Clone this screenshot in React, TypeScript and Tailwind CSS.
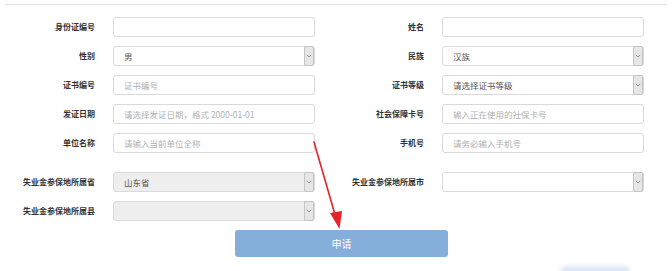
const font = { fontFamily: '"Noto Sans CJK SC", "Noto Sans", sans-serif' }

function Chevron() {
  return (
    <span className="absolute right-0 top-[-1px] bottom-[-1px] w-[10px] flex items-center justify-center bg-[#e6e6e6] border border-[#c4c4c4] rounded-[2px]">
      <svg width="6" height="4" viewBox="0 0 6 4" fill="none">
        <path d="M0.8 0.8L3 3L5.2 0.8" stroke="#8a8a8a" strokeWidth="0.9" />
      </svg>
    </span>
  )
}

function Field({
  value,
  placeholder,
  select,
  disabled,
}: {
  value?: string
  placeholder?: string
  select?: boolean
  disabled?: boolean
}) {
  return (
    <div
      className={`relative h-[20px] w-[202px] rounded-[3px] border border-[#d9d9d9] flex items-center pl-[10px] text-[8.5px] ${
        disabled ? 'bg-[#eeeeee]' : 'bg-white'
      }`}
    >
      {value ? (
        <span className="text-[#555]">{value}</span>
      ) : (
        <span className="text-[#b0b0b0]">{placeholder}</span>
      )}
      {select && <Chevron />}
    </div>
  )
}

function Row({ label, children }: { label: string; children: React.ReactNode }) {
  return (
    <div className="flex items-center">
      <div className="w-[95px] text-right text-[8px] font-bold text-[#333] whitespace-nowrap">{label}</div>
      <div className="ml-[18px]">{children}</div>
    </div>
  )
}

export default function App() {
  return (
    <div className="w-[672px] h-[271px] bg-white relative overflow-hidden" style={font}>
      <div className="mx-[5px] mt-[4px] border-t border-[#e6e6e6]" />

      <div className="flex flex-col gap-[9px] mt-[12px]">
        {[
          [
            { label: '身份证编号' },
            { label: '姓名' },
          ],
          [
            { label: '性别', value: '男', select: true },
            { label: '民族', value: '汉族', select: true },
          ],
          [
            { label: '证书编号', placeholder: '证书编号' },
            { label: '证书等级', value: '请选择证书等级', select: true },
          ],
          [
            { label: '发证日期', placeholder: '请选择发证日期，格式 2000-01-01' },
            { label: '社会保障卡号', placeholder: '输入正在使用的社保卡号' },
          ],
          [
            { label: '单位名称', placeholder: '请输入当前单位全称' },
            { label: '手机号', placeholder: '请务必输入手机号' },
          ],
        ].map((pair, i) => (
          <div key={i} className="flex">
            <div className="w-[329px]">
              <Row label={pair[0].label}>
                <Field {...pair[0]} />
              </Row>
            </div>
            <Row label={pair[1].label}>
              <Field {...pair[1]} />
            </Row>
          </div>
        ))}

        <div className="flex mt-[10px]">
          <div className="w-[329px]">
            <Row label="失业金参保地所属省">
              <Field value="山东省" select disabled />
            </Row>
          </div>
          <Row label="失业金参保地所属市">
            <Field select />
          </Row>
        </div>

        <div className="flex">
          <Row label="失业金参保地所属县">
            <Field select disabled />
          </Row>
        </div>

        <div className="flex">
          <button className="ml-[235px] w-[213px] h-[27px] rounded-[3px] bg-[#86aedb] text-white text-[10px]">
            申请
          </button>
        </div>
      </div>

      {/* red annotation arrow */}
      <svg className="absolute left-0 top-0" width="672" height="271" viewBox="0 0 672 271" fill="none">
        <path d="M314 142 L336 218" stroke="#e3242b" strokeWidth="1.6" strokeLinecap="round" />
        <path d="M330 213 L339.5 229 L342 211 Z" fill="#e3242b" />
      </svg>

      {/* faint blue smudge at bottom */}
      <div className="absolute left-[560px] top-[266px] w-[70px] h-[12px] rounded-full bg-[#dbe7f5] blur-[2px]" />
    </div>
  )
}
